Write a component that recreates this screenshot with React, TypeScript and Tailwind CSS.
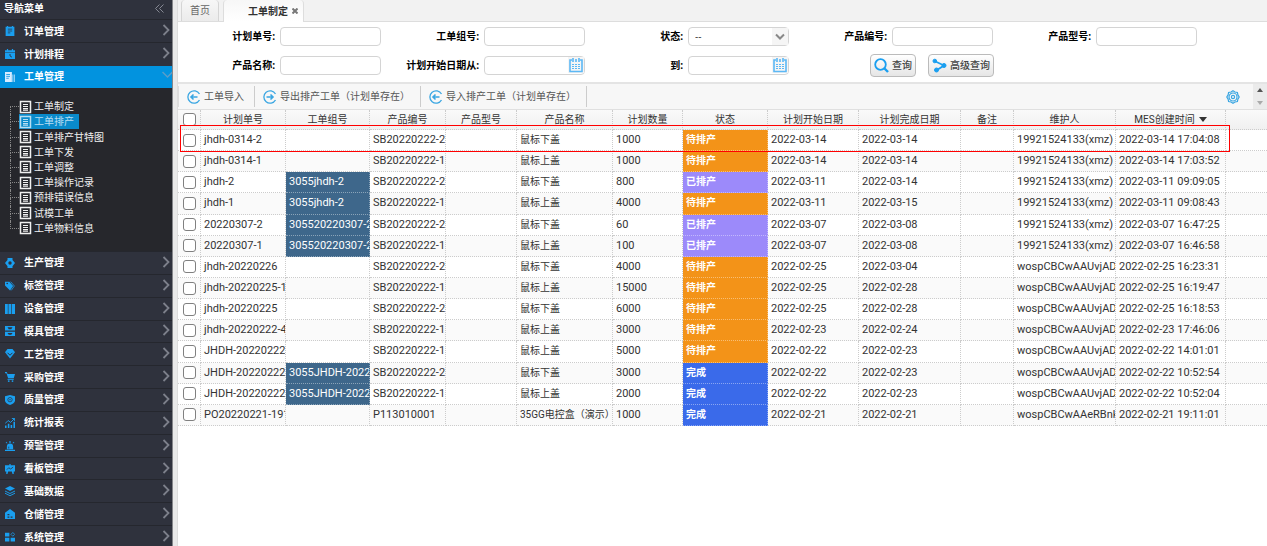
import React from 'react';

interface MenuItem {
  label: string;
  icon: string;
}

interface Order {
  plan: string;
  group: string;
  product: string;
  name: string;
  qty: number;
  status: string;
  start: string;
  end: string;
  owner: string;
  created: string;
}

const topMenu: MenuItem[] = [
  { label: '订单管理', icon: 'order' },
  { label: '计划排程', icon: 'plan' },
];

const subMenu = [
  '工单制定',
  '工单排产',
  '工单排产甘特图',
  '工单下发',
  '工单调整',
  '工单操作记录',
  '预排错误信息',
  '试模工单',
  '工单物料信息',
];

const bottomMenu: MenuItem[] = [
  { label: '生产管理', icon: 'produce' },
  { label: '标签管理', icon: 'tag' },
  { label: '设备管理', icon: 'device' },
  { label: '模具管理', icon: 'mold' },
  { label: '工艺管理', icon: 'craft' },
  { label: '采购管理', icon: 'cart' },
  { label: '质量管理', icon: 'quality' },
  { label: '统计报表', icon: 'report' },
  { label: '预警管理', icon: 'alarm' },
  { label: '看板管理', icon: 'board' },
  { label: '基础数据', icon: 'data' },
  { label: '仓储管理', icon: 'store' },
  { label: '系统管理', icon: 'system' },
];

const orders: Order[] = [
  { plan: 'jhdh-0314-2', group: '', product: 'SB20220222-2', name: '鼠标下盖', qty: 1000, status: '待排产', start: '2022-03-14', end: '2022-03-14', owner: '19921524133(xmz)', created: '2022-03-14 17:04:08' },
  { plan: 'jhdh-0314-1', group: '', product: 'SB20220222-1', name: '鼠标上盖', qty: 1000, status: '待排产', start: '2022-03-14', end: '2022-03-14', owner: '19921524133(xmz)', created: '2022-03-14 17:03:52' },
  { plan: 'jhdh-2', group: '3055jhdh-2', product: 'SB20220222-2', name: '鼠标下盖', qty: 800, status: '已排产', start: '2022-03-11', end: '2022-03-14', owner: '19921524133(xmz)', created: '2022-03-11 09:09:05' },
  { plan: 'jhdh-1', group: '3055jhdh-2', product: 'SB20220222-1', name: '鼠标上盖', qty: 4000, status: '待排产', start: '2022-03-11', end: '2022-03-15', owner: '19921524133(xmz)', created: '2022-03-11 09:08:43' },
  { plan: '20220307-2', group: '305520220307-2', product: 'SB20220222-2', name: '鼠标下盖', qty: 60, status: '已排产', start: '2022-03-07', end: '2022-03-08', owner: '19921524133(xmz)', created: '2022-03-07 16:47:25' },
  { plan: '20220307-1', group: '305520220307-2', product: 'SB20220222-1', name: '鼠标上盖', qty: 100, status: '已排产', start: '2022-03-07', end: '2022-03-08', owner: '19921524133(xmz)', created: '2022-03-07 16:46:58' },
  { plan: 'jhdh-20220226', group: '', product: 'SB20220222-2', name: '鼠标下盖', qty: 4000, status: '待排产', start: '2022-02-25', end: '2022-03-04', owner: 'wospCBCwAAUvjAD', created: '2022-02-25 16:23:31' },
  { plan: 'jhdh-20220225-1', group: '', product: 'SB20220222-1', name: '鼠标上盖', qty: 15000, status: '待排产', start: '2022-02-25', end: '2022-02-28', owner: 'wospCBCwAAUvjAD', created: '2022-02-25 16:19:47' },
  { plan: 'jhdh-20220225', group: '', product: 'SB20220222-2', name: '鼠标下盖', qty: 6000, status: '待排产', start: '2022-02-25', end: '2022-02-28', owner: 'wospCBCwAAUvjAD', created: '2022-02-25 16:18:53' },
  { plan: 'jhdh-20220222-4', group: '', product: 'SB20220222-1', name: '鼠标上盖', qty: 3000, status: '待排产', start: '2022-02-23', end: '2022-02-24', owner: 'wospCBCwAAUvjAD', created: '2022-02-23 17:46:06' },
  { plan: 'JHDH-20220222', group: '', product: 'SB20220222-1', name: '鼠标上盖', qty: 5000, status: '待排产', start: '2022-02-22', end: '2022-02-23', owner: 'wospCBCwAAUvjAD', created: '2022-02-22 14:01:01' },
  { plan: 'JHDH-20220222', group: '3055JHDH-2022', product: 'SB20220222-2', name: '鼠标下盖', qty: 3000, status: '完成', start: '2022-02-22', end: '2022-02-23', owner: 'wospCBCwAAUvjAD', created: '2022-02-22 10:52:54' },
  { plan: 'JHDH-20220222', group: '3055JHDH-2022', product: 'SB20220222-1', name: '鼠标上盖', qty: 2000, status: '完成', start: '2022-02-22', end: '2022-02-23', owner: 'wospCBCwAAUvjAD', created: '2022-02-22 10:52:04' },
  { plan: 'PO20220221-191', group: '', product: 'P113010001', name: '35GG电控盒（演示）', qty: 1000, status: '完成', start: '2022-02-21', end: '2022-02-21', owner: 'wospCBCwAAeRBnk', created: '2022-02-21 19:11:01' },
];

const statusColor: Record<string, string> = {
  待排产: 'bg-[#f39318]',
  已排产: 'bg-[#9c8afa]',
  完成: 'bg-[#3a6aea]',
};

const headers = ['计划单号', '工单组号', '产品编号', '产品型号', '产品名称', '计划数量', '状态', '计划开始日期', '计划完成日期', '备注', '维护人'];

const icons: Record<string, React.ReactNode> = {
  order: (
    <>
      <path d="M1 1h2V0h2v1h6V0h2v1h2v15H1z" />
      <path d="M4.500 5h7M4.500 8h7M4.500 11h4" stroke="#2f323d" strokeWidth="1.2" />
    </>
  ),
  plan: (
    <>
      <path d="M0 2h3V0h2v2h6V0h2v2h3v3H0zM0 6h16v10H0z" />
      <path d="M8 8v3l3 2" stroke="#2f323d" strokeWidth="1.5" fill="none" />
    </>
  ),
  work: (
    <>
      <path d="M0 0h11v16H0z" />
      <path d="M2 4h6M2 7h6M2 10h4" stroke="#0a95e0" strokeWidth="1.3" />
      <path d="M12.500 4v12M15 4v12" stroke="#d6ecff" strokeWidth="1.200" />
    </>
  ),
  produce: (
    <>
      <path d="M4 0h8v3l4 5-4 5v3H4v-3L0 8l4-5z" />
      <circle cx="8" cy="8" r="2.7" fill="#2f323d" />
    </>
  ),
  tag: (
    <>
      <path d="M0 1l7 0 6 7-5 7-8-8z" />
      <path d="M9 1l6 7-5 7" stroke="#1a9ff0" strokeWidth="1.2" fill="none" />
      <circle cx="3.5" cy="4" r="1.3" fill="#2f323d" />
    </>
  ),
  device: <path d="M0 0h4.500v16H0zM5.500 0h4.500v16h-4.500zM11 0h5v16h-5z" />,
  mold: (
    <>
      <path d="M0 0h16v7H0zM0 9h16v7H0z" />
      <path d="M4 2h8l-2 3H6zM4 11h8l-2 3H6z" fill="#2f323d" />
    </>
  ),
  craft: (
    <>
      <path d="M4 0h8l4 5-8 10-8-10z" />
      <path d="M4 6l4 4 4-4" stroke="#2f323d" strokeWidth="1.6" fill="none" />
    </>
  ),
  cart: (
    <>
      <path d="M0 0h3l1 3h12l-2 7H5L2.300 2H0z" />
      <path d="M4 11h10v1.500H4z" />
      <circle cx="6" cy="14.500" r="1.500" />
      <circle cx="12" cy="14.500" r="1.500" />
    </>
  ),
  quality: (
    <>
      <path d="M8 0l8 2v7c0 3-4 5.500-8 7-4-1.500-8-4-8-7V2z" />
      <circle cx="8" cy="7.500" r="3.500" fill="none" stroke="#2f323d" strokeWidth="1.200" />
      <circle cx="8" cy="7.500" r="1" fill="#2f323d" />
    </>
  ),
  report: (
    <>
      <path d="M0 12h2.500v4H0zM4.500 9h2.500v7H4.500zM9 11h2.500v5H9zM13.500 6H16v10h-2.500z" />
      <path d="M0 9l5-5 4 3 6-6M11 0.700h4.300v4" stroke="#1a9ff0" strokeWidth="1.500" fill="none" />
    </>
  ),
  alarm: (
    <>
      <path d="M3 13V9a5 5 0 0 1 10 0v4zM0 14h16v2H0zM7 0h2v3H7zM1 2l1-1 2 2-1 1zM15 2l-1-1-2 2 1 1z" />
      <path d="M6 12V9" stroke="#2f323d" strokeWidth="1.200" />
    </>
  ),
  board: (
    <>
      <path d="M0 2h7V0h2v2h7v10H0zM2 12h3l-1 4H2zM11 12h3v4h-2z" />
      <path d="M3 9l3-3 3 2 4-3" stroke="#2f323d" strokeWidth="1.300" fill="none" />
    </>
  ),
  data: (
    <>
      <path d="M8 0l8 4-8 4-8-4z" />
      <path d="M0 8l8 4 8-4M0 11.500l8 4 8-4" stroke="#1a9ff0" strokeWidth="1.500" fill="none" />
    </>
  ),
  store: (
    <>
      <path d="M0 6l8-6 8 6v10H0z" />
      <path d="M4 8h3v2H4zM4 12h3v2H4zM9 12h3v2H9z" fill="#2f323d" />
    </>
  ),
  system: (
    <>
      <path d="M0 1h7v6H0zM0 9h7v6H0zM9 9h7v6H9z" />
      <path d="M12.500 0.800l3 3-3 3-3-3z" fill="none" stroke="#1a9ff0" strokeWidth="1.300" />
    </>
  ),
};

const MenuRow: React.FC<{ item: MenuItem; active?: boolean }> = ({ item, active }) => (
  <a
    href="#"
    className={
      active
        ? 'flex flex-1 items-center bg-[#0293df] pl-[5px] pr-0'
        : 'flex flex-1 items-center border-t border-[#25272e] bg-[#2f323d] pl-[5px] pr-[2px]'
    }
  >
    <svg viewBox="0 0 16 16" className="h-[10px] w-[10px]" fill={active ? '#d6ecff' : '#1a9ff0'}>
      {icons[item.icon]}
    </svg>
    <span className="ml-[9px] flex-1 font-bold text-white">{item.label}</span>
    {active ? (
      <svg viewBox="0 0 10 10" className="mb-1 h-[10px] w-[10px]" fill="none" stroke="#5b9dc8" strokeWidth="1.5">
        <path d="M0.500 2l5 5 5-5" />
      </svg>
    ) : (
      <svg viewBox="0 0 8 12" className="mb-[2px] h-3 w-2" fill="none" stroke="#7d808b" strokeWidth="1.8">
        <path d="M1.500 1l5 5-5 5" />
      </svg>
    )}
  </a>
);

const Sidebar: React.FC = () => (
  <nav className="w-[173px] shrink-0 border-r border-[#85868a] bg-[#26272c]">
    <div className="flex h-[19px] items-center justify-between bg-[#2f323d] pl-1 pr-2 font-bold text-white">
      <span className="pb-[3px]">导航菜单</span>
      <button aria-label="收起" className="pb-[3px]">
        <svg viewBox="0 0 9 9" className="h-[9px] w-[9px]" fill="none" stroke="#858893">
          <path d="M4.500 0.500l-4 4 4 4M8.500 0.500l-4 4 4 4" />
        </svg>
      </button>
    </div>
    <div className="flex h-[69px] flex-col">
      {topMenu.map((item) => (
        <MenuRow key={item.label} item={item} />
      ))}
      <MenuRow item={{ label: '工单管理', icon: 'work' }} active />
    </div>
    <ul className="mb-[15px] mt-[11px] flex h-[137px] flex-col">
      {subMenu.map((label, index) => (
        <li key={label} className="flex flex-1 items-stretch pl-[10px]">
          <span className="flex w-[9px] flex-col">
            <span className={index === 0 ? 'flex-1 border-b border-dotted border-[#888]' : 'flex-1 border-b border-l border-dotted border-[#888]'} />
            <span className={index === subMenu.length - 1 ? 'flex-1' : 'flex-1 border-l border-dotted border-[#888]'} />
          </span>
          <a
            href="#"
            className={
              index === 1
                ? 'flex items-center bg-[#0a8aca] pr-[5px] text-[#b8def2]'
                : 'flex items-center text-[#f0f0f0]'
            }
          >
            <svg viewBox="0 0 13 14" className="h-[14px] w-[13px]" fill="none" stroke="currentColor">
              <path d="M1.500 1.500h10v11h-10z" strokeWidth="1.500" />
              <path d="M4 4.500h5M4 6.500h5M4 8.500h5M4 10.200h5" strokeWidth="1.200" />
            </svg>
            <span className="ml-[2px] whitespace-nowrap leading-[15px]">{label}</span>
          </a>
        </li>
      ))}
    </ul>
    <div className="flex h-[297px] flex-col">
      {bottomMenu.map((item) => (
        <MenuRow key={item.label} item={item} />
      ))}
    </div>
  </nav>
);

const CalendarIcon: React.FC = () => (
  <svg viewBox="0 0 16 16" className="h-4 w-4" fill="none" stroke="#5cb8f5">
    <path d="M4 3H2v11.500h12V3h-2" strokeWidth="1.600" />
    <path d="M5 1v4M11 1v4M8 2v3" strokeWidth="1.600" />
    <path d="M4 7.500h8M4 9.500h8M4 11.500h8" strokeDasharray="2 1" />
  </svg>
);

const Field: React.FC<{ id: string; label: string; date?: boolean }> = ({ id, label, date }) => (
  <div className="flex items-center justify-end gap-[5px] pr-px">
    <label htmlFor={id} className="whitespace-nowrap font-bold text-black">
      {label}:
    </label>
    <span className="flex h-[19px] w-[101px] items-center rounded-[4px] border border-[#d4d4d4] bg-white">
      <input id={id} className="h-full w-full min-w-0 bg-transparent px-1 outline-none" />
      {date && (
        <button type="button" aria-label="选择日期" className="shrink-0 bg-[#f5f5f5]">
          <CalendarIcon />
        </button>
      )}
    </span>
  </div>
);

const SearchForm: React.FC = () => (
  <form className="grid grid-cols-5 gap-y-[7px] border-b-2 border-[#e4e4e4] bg-white pb-[5px] pr-[69px] pt-[5px]">
    <Field id="plan" label="计划单号" />
    <Field id="group" label="工单组号" />
    <div className="flex items-center justify-end gap-[5px] pr-px">
      <label htmlFor="status" className="font-bold text-black">
        状态:
      </label>
      <span className="relative h-[19px] w-[101px]">
        <select id="status" className="h-full w-full appearance-none rounded-[4px] border border-[#d4d4d4] bg-white pl-[6px] text-[#333]">
          <option>--</option>
        </select>
        <span className="pointer-events-none absolute inset-y-px right-px flex w-4 items-center justify-center bg-[#f5f5f5]">
          <svg viewBox="0 0 10 8" className="h-2 w-[10px]" fill="none" stroke="#888" strokeWidth="2">
            <path d="M1 1.500l4 4 4-4" />
          </svg>
        </span>
      </span>
    </div>
    <Field id="product" label="产品编号" />
    <Field id="model" label="产品型号" />
    <Field id="name" label="产品名称" />
    <Field id="from" label="计划开始日期从" date />
    <Field id="to" label="到" date />
    <div className="flex h-[24px] items-center justify-end gap-3">
      <button type="button" className="flex h-[23px] items-center gap-[3px] rounded-[4px] border border-[#bbb] bg-linear-to-b from-white to-[#e6e6e6] px-[3px] font-medium whitespace-nowrap text-[#444]">
        <svg viewBox="0 0 15 15" className="h-[15px] w-[15px]" fill="none" stroke="#1a9ff0">
          <circle cx="6.500" cy="6.500" r="5.300" strokeWidth="1.800" />
          <path d="M10.500 10.500l3.500 3.500" strokeWidth="2.400" />
        </svg>
        查询
      </button>
      <button type="button" className="flex h-[23px] items-center gap-[3px] rounded-[4px] border border-[#bbb] bg-linear-to-b from-white to-[#e6e6e6] px-[3px] font-medium whitespace-nowrap text-[#444]">
        <svg viewBox="0 0 15 15" className="h-[15px] w-[15px]" fill="#1a9ff0" stroke="#1a9ff0">
          <path d="M2.500 3l9.500 4.500-7 4.500" fill="none" strokeWidth="1.800" />
          <circle cx="2.800" cy="3" r="1.800" />
          <circle cx="12" cy="7.500" r="2" />
          <circle cx="4.500" cy="12" r="2" />
        </svg>
        高级查询
      </button>
    </div>
  </form>
);

const ToolButton: React.FC<{ label: string; out?: boolean }> = ({ label, out }) => (
  <button className="flex h-[21px] items-center gap-[3px] border-r border-[#ccc] pl-2 pr-[10px] whitespace-nowrap text-[#555]">
    <svg viewBox="0 0 14 14" className="h-[14px] w-[14px]" fill="none" stroke="#3aa6e2" strokeWidth="1.300">
      <path d="M12.500 4A6.200 6.200 0 1 0 12.500 10" />
      <path d={out ? 'M3.500 7h6.500M7.500 4.500l2.500 2.500-2.500 2.500' : 'M10.500 7h-6.500M6.500 4.500l-2.500 2.500 2.500 2.500'} strokeWidth="1.600" />
    </svg>
    {label}
  </button>
);

const Toolbar: React.FC = () => (
  <div className="flex h-[26px] items-center border-b border-[#e0e0e0] bg-[#f7f7f7]">
    <div className="flex flex-1 border-l border-[#ddd]">
      <ToolButton label="工单导入" />
      <ToolButton label="导出排产工单（计划单存在）" out />
      <ToolButton label="导入排产工单（计划单存在）" />
    </div>
    <button aria-label="设置" className="mr-[13px]">
      <svg viewBox="0 0 14 14" className="h-[14px] w-[14px]" fill="none" stroke="#3aa6e2" strokeWidth="1.200">
        <path d="M7 0.800l2 1.200 2.400 0.500 0.500 2.400L13.200 7l-1.300 2.100-0.500 2.400-2.400 0.500L7 13.200l-2-1.200-2.400-0.500-0.500-2.400L0.800 7l1.300-2.100 0.500-2.400L5 2z" />
        <circle cx="7" cy="7" r="4" />
        <circle cx="7" cy="7" r="1.600" />
      </svg>
    </button>
    <div className="flex h-full w-[14px] flex-col items-center justify-around bg-[#ebebeb]">
      <button aria-label="上移">
        <svg viewBox="0 0 6 4" className="h-1 w-[6px]" fill="#555">
          <path d="M3 0l3 4H0z" />
        </svg>
      </button>
      <button aria-label="下移">
        <svg viewBox="0 0 6 4" className="h-1 w-[6px]" fill="#aaa">
          <path d="M0 0h6L3 4z" />
        </svg>
      </button>
    </div>
  </div>
);

const Check: React.FC<{ label: string }> = ({ label }) => (
  <input type="checkbox" aria-label={label} className="mx-auto block h-[13px] w-[13px] appearance-none rounded-[3px] border border-[#808080] bg-white" />
);

const OrderTable: React.FC = () => {
  const base = 'overflow-hidden border-b border-r border-dotted pl-[3px] whitespace-nowrap';
  const cell = `${base} border-[#ccc]`;
  const filled = `${base} border-white/40 text-white`;

  return (
    <div className="relative">
      <table className="h-[316px] w-full table-fixed border-separate border-spacing-0 font-[Roboto,'Noto_Sans_CJK_SC',sans-serif] text-[11px] leading-[16px] text-[#333]">
        <colgroup>
          <col className="w-[23px]" />
          <col className="w-[85px]" />
          <col className="w-[84px]" />
          <col className="w-[76px]" />
          <col className="w-[71px]" />
          <col className="w-[96px]" />
          <col className="w-[70px]" />
          <col className="w-[85px]" />
          <col className="w-[91px]" />
          <col className="w-[102px]" />
          <col className="w-[53px]" />
          <col className="w-[102px]" />
          <col className="w-[110px]" />
          <col />
        </colgroup>
        <thead>
          <tr className="h-[20px] bg-linear-to-b from-[#fafafa] to-[#f0f0f0] text-[10px]">
            <th className="border-b border-r border-dotted border-[#ccc] p-0">
              <Check label="全选" />
            </th>
            {headers.map((header) => (
              <th key={header} className="border-b border-r border-dotted border-[#ccc] p-0 font-normal whitespace-nowrap">
                {header}
              </th>
            ))}
            <th className="border-b border-r border-dotted border-[#ccc] p-0 font-normal whitespace-nowrap">
              <span className="flex items-center justify-center gap-1">
                MES创建时间
                <svg viewBox="0 0 8 5" className="h-[5px] w-2" fill="#333">
                  <path d="M0 0h8L4 5z" />
                </svg>
              </span>
            </th>
            <th className="border-b border-dotted border-[#ccc] p-0" />
          </tr>
        </thead>
        <tbody>
          {orders.map((order, index) => (
            <tr key={index} className="h-[21px] odd:bg-white even:bg-[#fafafa]">
              <td className="border-b border-r border-dotted border-[#ccc] p-0">
                <Check label={order.plan} />
              </td>
              <td className={cell}>{order.plan}</td>
              <td className={order.group ? `${filled} bg-[#3e678b]` : cell}>{order.group}</td>
              <td className={cell}>{order.product}</td>
              <td className={cell} />
              <td className={`${cell} text-[10px]`}>{order.name}</td>
              <td className={cell}>{order.qty}</td>
              <td className={`${filled} text-[10px] font-bold ${statusColor[order.status]}`}>{order.status}</td>
              <td className={cell}>{order.start}</td>
              <td className={cell}>{order.end}</td>
              <td className={cell} />
              <td className={cell}>{order.owner}</td>
              <td className={cell}>{order.created}</td>
              <td className="border-b border-dotted border-[#ccc]" />
            </tr>
          ))}
        </tbody>
      </table>
      {/* marks the newest order */}
      <div className="pointer-events-none absolute left-[2px] right-[37px] top-[15px] h-[27px] border border-solid border-[#ff0000]" />
    </div>
  );
};

const App: React.FC = () => {
  return (
    <div className="flex h-screen overflow-hidden bg-[#e9e9e9] font-['Open_Sans','Noto_Sans_CJK_SC',sans-serif] text-[10px] leading-[15px]">
      <Sidebar />
      <main className="ml-1 min-w-0 flex-1 border-l border-[#ddd] bg-white">
        <div className="flex h-[22px] items-start gap-1 border-b border-[#ddd] bg-[#f2f2f2] pl-[3px]">
          <button className="h-[21px] rounded-t-[4px] border-x border-[#d5d5d5] bg-linear-to-b from-[#f7f7f7] to-[#ebebeb] px-2 text-[#666]">
            首页
          </button>
          <div className="flex h-[22px] items-center gap-1 rounded-t-[4px] border-x border-[#ddd] bg-linear-to-b from-[#f7f7f7] to-white pl-6 pr-[5px]">
            <button className="font-bold text-[#333]">工单制定</button>
            <button aria-label="关闭">
              <svg viewBox="0 0 6 6" className="h-[6px] w-[6px]" stroke="#777" strokeWidth="2">
                <path d="M0.500 0.500l5 5M5.500 0.500l-5 5" />
              </svg>
            </button>
          </div>
        </div>
        <SearchForm />
        <Toolbar />
        <OrderTable />
      </main>
    </div>
  );
};

export default App;
